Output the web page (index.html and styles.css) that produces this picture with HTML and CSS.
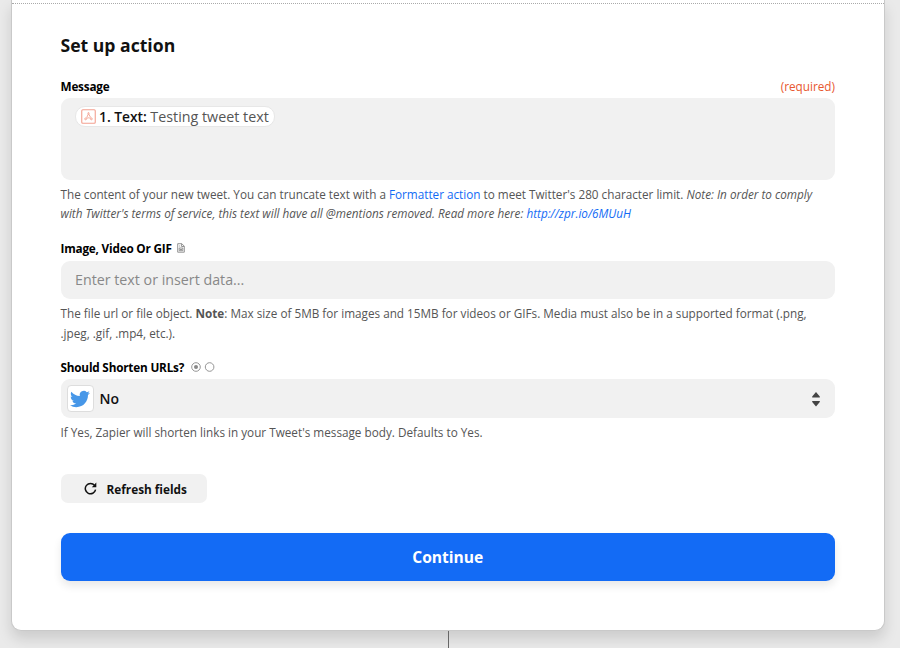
FILE: index.html
```
<!DOCTYPE html>
<html lang="en">
<head>
<meta charset="utf-8">
<title>Set up action</title>
<link rel="stylesheet" href="styles.css">
</head>
<body>
<main class="card">
  <div class="divider"></div>
  <form class="content">
    <h1 class="title">Set up action</h1>

    <div class="label-row message-label"><span class="label">Message</span><span class="required">(required)</span></div>
    <div class="field message-field">
      <span class="pill">
        <svg class="pill-icon" width="15" height="15" viewBox="0 0 15 15" fill="none" stroke="#f3a090" stroke-width=".9"><rect x=".75" y=".75" width="13.5" height="13.5" rx="1" stroke-width="1.1"/><path d="M7.3 5L5.6 8.8M7.7 5l2.1 3.7M5.8 9.6c1.2-1 2.2-1.1 3.4-.2"/><circle cx="7.5" cy="4.3" r=".7"/><circle cx="4.6" cy="9.9" r=".9"/><circle cx="10.4" cy="9.9" r=".9"/></svg>
        <b class="pill-name">1. Text:</b><span class="pill-value">Testing tweet text</span>
      </span>
    </div>
    <p class="help message-help">The content of your new tweet. You can truncate text with a <a>Formatter action</a> to meet Twitter's 280 character limit. <i>Note: In order to comply<br>with Twitter's terms of service, this text will have all @mentions removed. Read more here: <a>http://zpr.io/6MUuH</a></i></p>

    <div class="label-row media-label"><span class="label">Image, Video Or GIF</span>
      <svg class="file-icon" width="8" height="10" viewBox="0 0 8 10" fill="none" stroke="#888" stroke-width=".9"><path d="M.7.7h4.1l2.5 2.5v6H.7zM4.6.8v2.7h2.6M2.2 3h1M2.2 5h3.6v2.7H2.2zM3 7l1-1 1 1"/></svg>
    </div>
    <div class="field input-field"><span class="placeholder">Enter text or insert data...</span></div>
    <p class="help media-help">The file url or file object. <b>Note</b>: Max size of 5MB for images and 15MB for videos or GIFs. Media must also be in a supported format (.png,<br>.jpeg, .gif, .mp4, etc.).</p>

    <div class="label-row urls-label"><span class="label">Should Shorten URLs?</span>
      <svg class="radio-icon" width="24" height="10" viewBox="0 0 24 10" fill="none" stroke="#8a8a8a" stroke-width=".9"><circle cx="5" cy="5" r="4.3"/><circle cx="5" cy="5" r="2" fill="#888" stroke="none"/><circle cx="18.6" cy="5" r="4.3"/></svg>
    </div>
    <div class="field input-field select">
      <span class="app"><svg width="20" height="20" viewBox="0 0 24 24" fill="#4797e8"><path d="M23.95 4.57a10 10 0 0 1-2.82.77 4.96 4.96 0 0 0 2.16-2.72c-.95.55-2 .95-3.13 1.18a4.92 4.92 0 0 0-8.38 4.48C7.69 8.1 4.07 6.13 1.64 3.16a4.82 4.82 0 0 0-.67 2.48c0 1.7.87 3.21 2.19 4.1a4.9 4.9 0 0 1-2.23-.62v.06a4.92 4.92 0 0 0 3.95 4.83 5 5 0 0 1-2.21.09 4.94 4.94 0 0 0 4.6 3.42A9.87 9.87 0 0 1 0 19.54a13.99 13.99 0 0 0 7.56 2.21c9.05 0 14-7.5 14-13.98 0-.21 0-.42-.02-.63A9.94 9.94 0 0 0 24 4.59z"/></svg></span>
      <span class="selected">No</span>
      <svg class="arrows" width="8" height="16" viewBox="0 0 8 16" fill="#444"><path d="M4 .9L7.8 5.4V6.6H.2V5.4zM4 15.6L7.8 11.1V9.9H.2v1.2z"/></svg>
    </div>
    <p class="help urls-help">If Yes, Zapier will shorten links in your Tweet's message body. Defaults to Yes.</p>

    <button type="button" class="refresh"><svg width="13" height="13" viewBox="0 0 13 13" fill="none" stroke="#111" stroke-width="1.5"><path d="M10.6 3.4A5.2 5.2 0 1 0 11.6 7.7"/><path d="M12.3.6v4.7H7.8z" fill="#111" stroke="none"/></svg><span>Refresh fields</span></button>
    <button type="button" class="continue"><span>Continue</span></button>
  </form>
</main>
<div class="connector"></div>
</body>
</html>
```
FILE: styles.css
```
* { box-sizing: border-box; }
body {
  margin: 0;
  height: 648px;
  overflow: hidden;
  background: #eaeaea;
  color: #111;
  font-family: "Open Sans", sans-serif;
}
.card {
  width: 874px;
  height: 631px;
  margin-left: 11px;
  background: #fff;
  border: 1px solid #c9c9c9;
  border-top: 0;
  border-radius: 0 0 10px 10px;
  box-shadow: 0 8px 14px rgba(0, 0, 0, .13);
}
.divider { height: 4px; border-bottom: 1px dotted #aaa; }
.content { padding: 29px 49px 0 48.5px; }
.title { margin: 0; height: 24px; font-size: 17.6px; line-height: 24px; font-weight: 700; }
.label-row { display: flex; align-items: center; height: 18px; font-size: 11.75px; line-height: 18px; }
.label, .required { padding-bottom: 2px; }
.label { font-weight: 700; color: #000; letter-spacing: -.2px; }
.message-label { margin-top: 21px; justify-content: space-between; }
.required { color: #e8582f; }
.field { background: #f1f1f1; border-radius: 9px; }
.message-field { height: 82px; margin-top: 2px; padding: 8px 14.5px; }
.pill {
  display: flex;
  align-items: center;
  width: 200px;
  height: 21px;
  padding-left: 5px;
  border-radius: 10px;
  background: #fff;
  border: 1px solid #e7e7e7;
  white-space: nowrap;
}
.pill-icon { flex: none; margin-right: 3px; }
.pill-name { color: #111; font-size: 13.8px; font-weight: 600; margin-right: 3.5px; }
.pill-value { color: #555; font-size: 14.3px; }
.help { margin: 0; font-size: 11.74px; line-height: 19.5px; color: #555; white-space: nowrap; }
.help a { color: #136bf5; }
.message-help { margin-top: 5px; height: 39px; line-height: 19px; font-size: 11.72px; }
.media-label { margin-top: 16px; gap: 5px; }
.file-icon { margin-top: -2px; }
.input-field { display: flex; align-items: center; height: 38px; margin-top: 2.5px; padding: 0 14.5px; }
.placeholder { color: #888; font-size: 14.25px; }
.media-help { margin-top: 5.5px; height: 39px; }
.urls-label { margin-top: 16px; gap: 7px; }
.radio-icon { margin-top: -2px; }
.select { height: 39px; margin-top: 2px; padding: 0 15px 0 6px; }
.app {
  display: flex;
  align-items: center;
  justify-content: center;
  width: 27px;
  height: 27px;
  background: #fff;
  border: 1px solid #ddd;
  border-radius: 4px;
}
.selected { margin-left: 6px; font-size: 14px; font-weight: 600; }
.arrows { margin-left: auto; }
.urls-help { margin-top: 5px; height: 20px; }
button { display: flex; align-items: center; border: 0; font-family: inherit; font-weight: 700; }
.refresh {
  width: 146px;
  height: 29px;
  margin-top: 31px;
  padding: 0 0 0 23px;
  gap: 10px;
  background: #f1f1f1;
  border-radius: 7px;
  color: #111;
  font-size: 11.8px;
}
.continue {
  width: 100%;
  height: 48.5px;
  margin-top: 29.5px;
  padding: 0;
  justify-content: center;
  border-radius: 9px;
  background: #136bf5;
  color: #fff;
  font-size: 15.6px;
  box-shadow: 0 5px 8px rgba(0, 0, 0, .09);
}
.connector { width: 1px; height: 17px; margin-left: 448px; background: #666; position: relative; }
```
